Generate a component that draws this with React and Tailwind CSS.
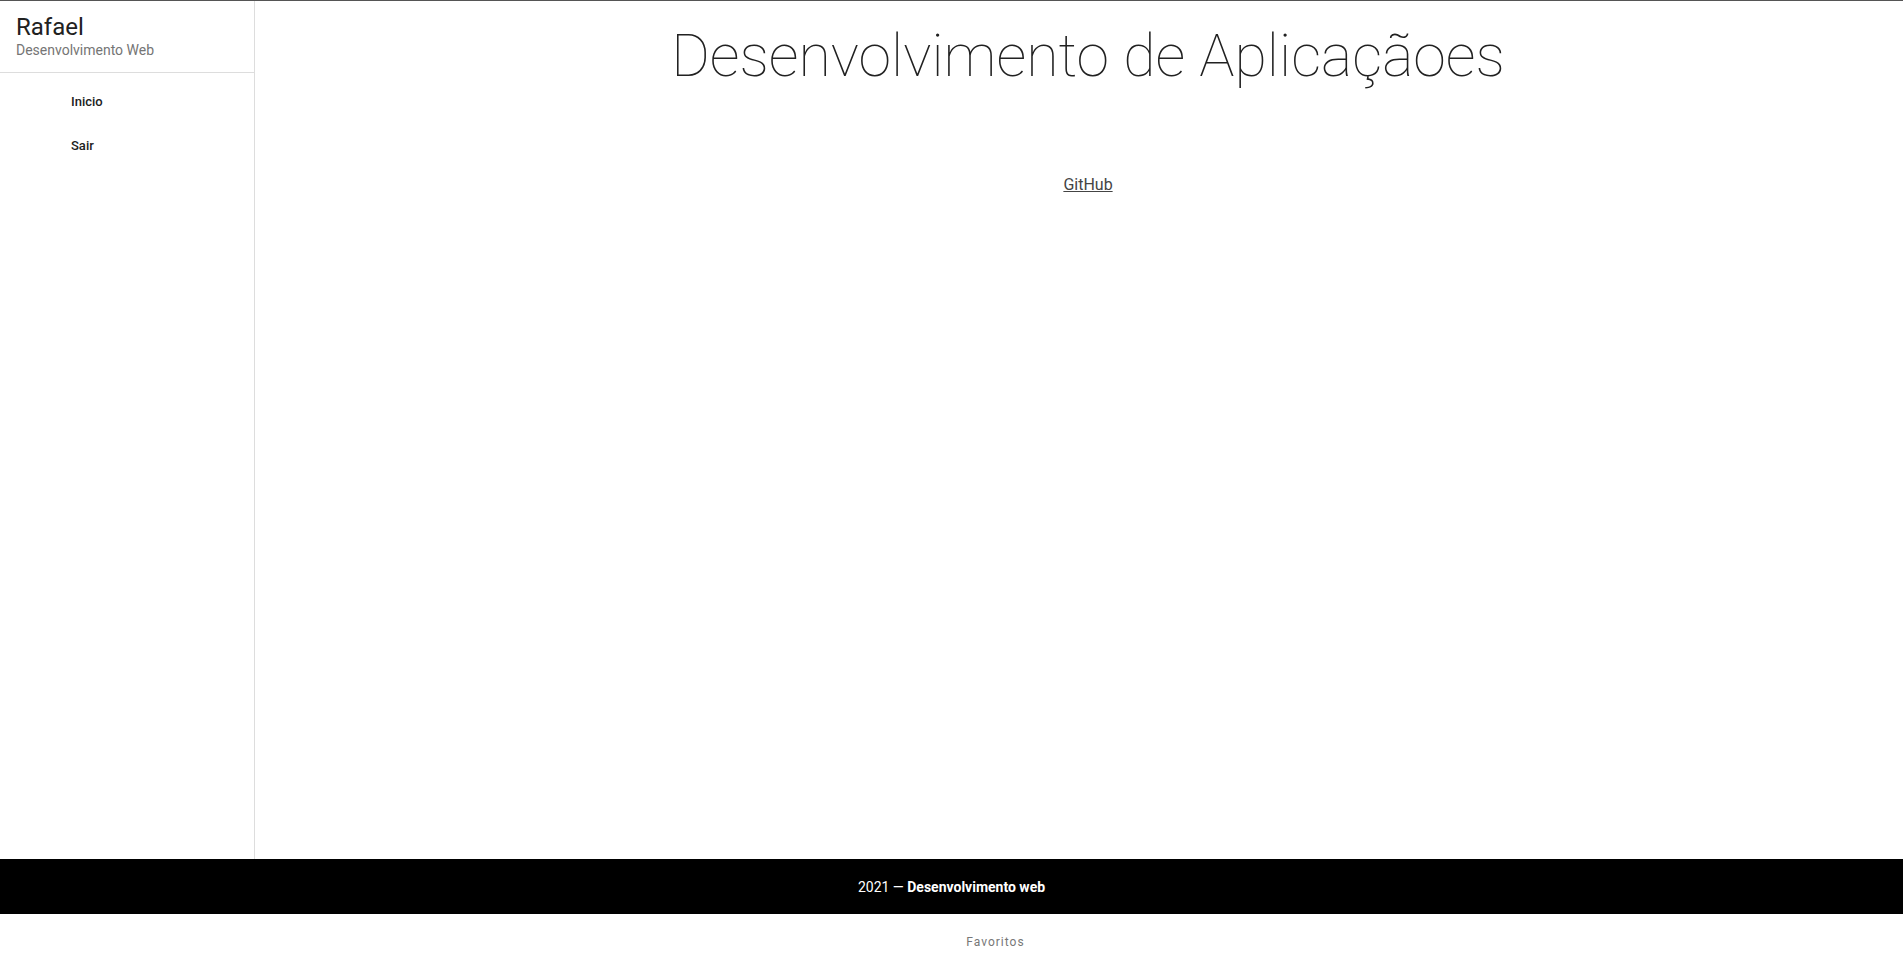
export default function App() {
  return (
    <div className="min-h-screen flex flex-col bg-white border-t border-[#555] font-['Roboto',sans-serif]">
      <div className="flex h-[858px]">
        {/* Sidebar */}
        <aside className="w-[255px] shrink-0 border-r border-[#ddd] flex flex-col">
          <div className="h-[72px] border-b border-[#ddd] px-4 pt-[12px]">
            <div className="text-[24px] leading-[28px] text-[#212121]">Rafael</div>
            <div className="text-[14px] leading-[18px] text-[#757575]">Desenvolvimento Web</div>
          </div>
          <nav className="flex flex-col pt-[21px] pl-[71px]">
            <a href="#" className="h-[44px] flex items-start text-[13px] leading-[16px] font-medium text-[#212121]">
              Inicio
            </a>
            <a href="#" className="h-[44px] flex items-start text-[13px] leading-[16px] font-medium text-[#212121]">
              Sair
            </a>
          </nav>
        </aside>

        {/* Main */}
        <main className="flex-1 flex flex-col items-center pl-[18px]">
          <h1 className="mt-[19px] text-[59px] leading-[72px] font-thin text-[#212121]">
            Desenvolvimento de Aplicaçãoes
          </h1>
          <a href="#" className="mt-[81px] text-[16px] leading-[24px] text-[#444] underline">
            GitHub
          </a>
        </main>
      </div>

      {/* Footer */}
      <footer className="h-[55px] bg-black flex items-center justify-center text-white text-[14px] leading-[20px]">
        <span>
          2021 — <strong className="font-bold">Desenvolvimento web</strong>
        </span>
      </footer>
      <div className="h-[55px] flex items-center justify-center pl-[88px]">
        <span className="text-[12px] leading-[16px] tracking-[1px] text-[#777]">Favoritos</span>
      </div>
    </div>
  )
}
